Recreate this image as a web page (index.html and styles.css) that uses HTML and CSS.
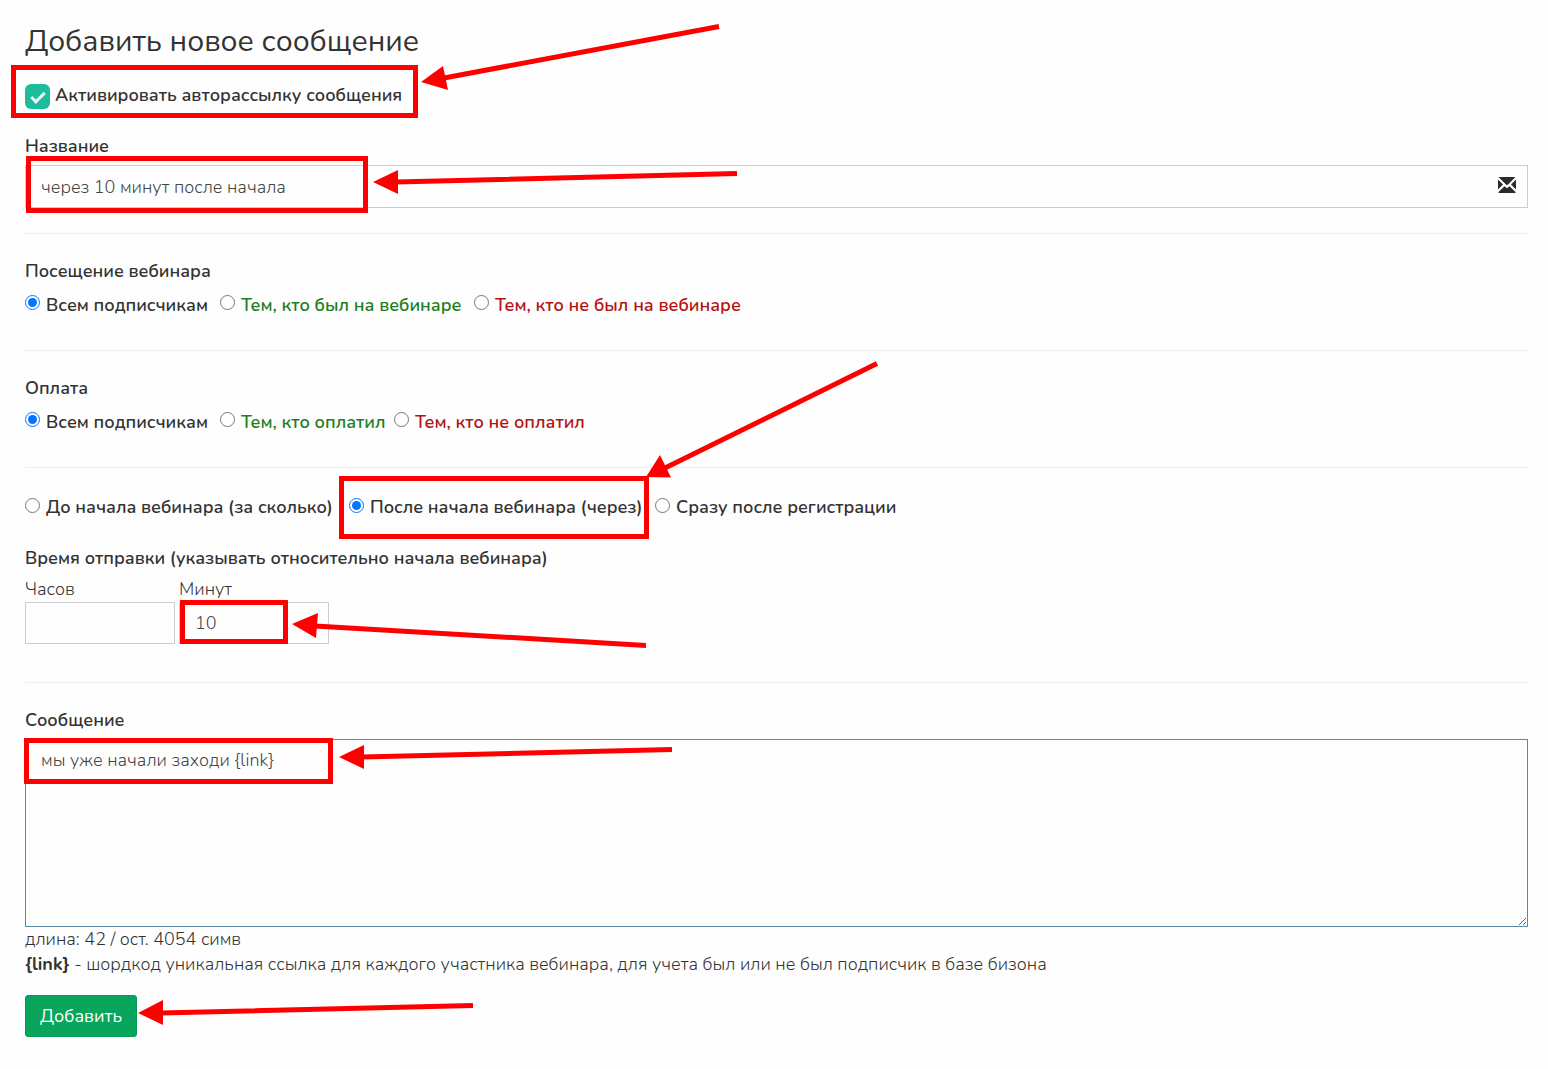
FILE: index.html
```html
<!DOCTYPE html>
<html lang="ru">
<head>
<meta charset="utf-8">
<title>Добавить новое сообщение</title>
<link rel="stylesheet" href="styles.css">
</head>
<body>
<main class="page">
  <h1 class="title">Добавить новое сообщение</h1>
  <form class="form">
    <label class="switch">
      <input class="switch-box" type="checkbox" checked>
      <span>Активировать авторассылку сообщения</span>
    </label>

    <section class="group name-group">
      <label class="label" for="name">Название</label>
      <div class="field">
        <input class="field-input" id="name" type="text" value="через 10 минут после начала">
        <svg class="envelope" viewBox="0 0 18 16" aria-hidden="true">
          <path d="M0.500 0H17.500L10.500 7 9 8.200 7.500 7zM0 2.500 5 7.500 0 12.500zM18 2.500V12.500L13 7.500zM0.500 16V15L6.500 9.200 9 11.200 11.500 9.200 17.500 15V16z"/>
        </svg>
      </div>
    </section>

    <fieldset class="group audience">
      <legend class="label">Посещение вебинара</legend>
      <div class="options visit">
        <label class="option"><input type="radio" name="visit" checked><span>Всем подписчикам</span></label>
        <label class="option yes"><input type="radio" name="visit"><span>Тем, кто был на вебинаре</span></label>
        <label class="option no"><input type="radio" name="visit"><span>Тем, кто не был на вебинаре</span></label>
      </div>
    </fieldset>

    <fieldset class="group audience">
      <legend class="label">Оплата</legend>
      <div class="options payment">
        <label class="option"><input type="radio" name="payment" checked><span>Всем подписчикам</span></label>
        <label class="option yes"><input type="radio" name="payment"><span>Тем, кто оплатил</span></label>
        <label class="option no"><input type="radio" name="payment"><span>Тем, кто не оплатил</span></label>
      </div>
    </fieldset>

    <section class="group schedule">
      <div class="options moment">
        <label class="option"><input type="radio" name="moment"><span>До начала вебинара (за сколько)</span></label>
        <label class="option"><input type="radio" name="moment" checked><span>После начала вебинара (через)</span></label>
        <label class="option"><input type="radio" name="moment"><span>Сразу после регистрации</span></label>
      </div>
      <h2 class="label">Время отправки (указывать относительно начала вебинара)</h2>
      <div class="times">
        <label class="time"><span>Часов</span><input class="field-input" type="text"></label>
        <label class="time"><span>Минут</span><input class="field-input" type="text" value="10"></label>
      </div>
    </section>

    <section class="group">
      <label class="label" for="message">Сообщение</label>
      <textarea class="message" id="message">мы уже начали заходи {link}</textarea>
      <p class="note">длина: 42 / ост. 4054 симв</p>
      <p class="note"><b>{link}</b> - шордкод уникальная ссылка для каждого участника вебинара, для учета был или не был подписчик в базе бизона</p>
      <button class="submit" type="button">Добавить</button>
    </section>
  </form>

  <svg class="marks" aria-hidden="true">
    <g class="frames">
      <rect x="13.500" y="67.500" width="402" height="48"/>
      <rect x="28.500" y="158.500" width="337" height="52"/>
      <rect x="341.500" y="478.500" width="305" height="58"/>
      <rect x="182.500" y="602.500" width="103" height="39"/>
      <rect x="26.500" y="740.500" width="304" height="41"/>
    </g>
    <g class="arrows">
      <path d="M719 26.500 444 78M737 173.500 396 182M877 363.500 665 468M646 645.500 315 626M672 749.500 362 757M473 1005.500 161 1013"/>
    </g>
    <g class="heads">
      <path d="M421 82 443 66 448 90zM373 182 398 170V194zM646 477 660 455 671 477.500zM292 624 318 613 316 638zM339 757 364 745V769zM138 1013 163 1000V1025z"/>
    </g>
  </svg>
</main>
</body>
</html>
```
FILE: styles.css
```css
*,
*::before { box-sizing: border-box; }

body {
  margin: 0;
  background: #fefefe;
  color: #333;
  font: 300 18px/25px Nunito, "Open Sans", sans-serif;
}

.page {
  position: relative;
  padding: 25px 20px 32px 25px;
}

.title {
  margin: 0;
  font-size: 30px;
  font-weight: 400;
  line-height: 34px;
}

.form {
  display: flex;
  flex-direction: column;
  margin-top: 24px;
}

.switch {
  display: flex;
  align-items: flex-start;
  align-self: flex-start;
  gap: 5px;
  height: 26px;
  font-weight: 600;
}

.switch-box {
  appearance: none;
  display: grid;
  place-items: center;
  width: 25px;
  height: 25px;
  margin: 1px 0 0;
  border-radius: 6px;
  background: #1fbc9c;
}

.switch-box:checked::before {
  content: "";
  width: 14px;
  height: 8px;
  border: solid #e6fbf5;
  border-width: 0 0 3px 3px;
  transform: translateY(-1px) rotate(-45deg);
}

.group {
  display: flex;
  flex-direction: column;
  min-width: 0;
  margin: 0;
  padding: 25px 0 0;
  border: 0;
}

.group + .group { border-top: 1px solid #eee; }

.name-group { padding-bottom: 25px; }
.audience { padding-bottom: 32px; }
.schedule { padding-bottom: 38px; }

.label {
  margin: 0;
  padding: 0;
  font-size: 18px;
  font-weight: 600;
  line-height: 25px;
}

.audience .label { float: left; }

.field {
  display: grid;
  align-items: center;
  margin-top: 6px;
}

.field > * { grid-area: 1 / 1; }

.field-input,
.message {
  width: 100%;
  padding: 0 15px;
  border: 1px solid #ccc;
  border-radius: 0;
  outline: 0;
  background: transparent;
  color: #444;
  font: inherit;
}

.field-input { height: 43px; }

.envelope {
  justify-self: end;
  width: 18px;
  height: 16px;
  margin: 0 12px 4px 0;
  fill: #2b2b2b;
}

.options {
  display: grid;
  font-weight: 600;
}

.audience .options {
  clear: both;
  padding-top: 9px;
}

.visit { grid-template-columns: 195px 254px 1fr; }
.payment { grid-template-columns: 195px 174px 1fr; }
.moment { grid-template-columns: 324px 306px 1fr; }

.option {
  display: flex;
  align-items: flex-start;
  gap: 6px;
  white-space: nowrap;
}

.option input {
  width: 15px;
  height: 15px;
  margin: 2px 0 0;
}

.moment input { margin-top: 3px; }

.yes { color: #1d7f22; }
.no { color: #b51212; }

.schedule { padding-top: 27px; }
.schedule .label { margin-top: 26px; }

.times {
  display: flex;
  gap: 4px;
  margin-top: 6px;
}

.time {
  display: flex;
  flex-direction: column;
  width: 150px;
}

.time .field-input { height: 42px; }

.message {
  height: 188px;
  margin-top: 6px;
  padding: 8px 15px;
  border-color: #5a8ba0;
  resize: vertical;
}

.note { margin: 0; }
.note b { font-weight: 700; }

.submit {
  align-self: flex-start;
  height: 42px;
  margin-top: 18px;
  padding: 0 14px;
  border: 1px solid #089a55;
  border-radius: 3px;
  background: #07a65c;
  color: #fff;
  font: inherit;
  font-weight: 400;
}

/* Hand-drawn hints lie over the form */
.marks {
  position: absolute;
  top: 0;
  left: 0;
  width: 100%;
  height: 100%;
  pointer-events: none;
}

.frames,
.arrows {
  fill: none;
  stroke: #f00;
  stroke-width: 5px;
}

.heads { fill: #f00; }
```
